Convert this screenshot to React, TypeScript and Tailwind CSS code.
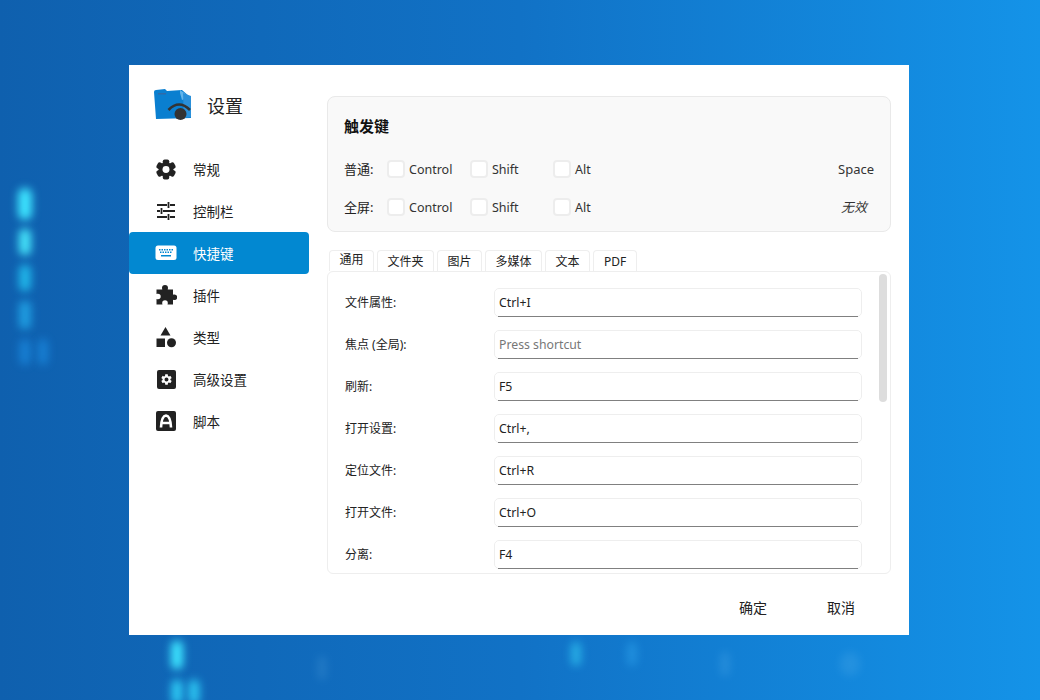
import React from "react";
import { MdSettings } from "react-icons/md";

function Check({ label }: { label: string }) {
  return (
    <div className="flex items-center w-[83px]">
      <span className="w-[18px] h-[18px] rounded-[4px] border-2 border-[#ededed] bg-white mr-[4px] shrink-0" />
      <span className="text-[12.5px] leading-none pt-[2px] text-[#333]">{label}</span>
    </div>
  );
}

function TriggerRow({ title, value, italic }: { title: string; value: string; italic?: boolean }) {
  return (
    <div className="flex items-center h-[38px]">
      <span className="w-[43px] text-[13px] pt-[1px] text-[#222] shrink-0">{title}</span>
      <Check label="Control" />
      <Check label="Shift" />
      <Check label="Alt" />
      <span className={"ml-auto text-[13px] pt-[2px] text-[#333] " + (italic ? "italic mr-[7px]" : "")}>{value}</span>
    </div>
  );
}

function Row({ label, value, placeholder }: { label: string; value: string; placeholder?: boolean }) {
  return (
    <div className="flex items-start h-[42px] shrink-0">
      <span className="w-[149px] h-[28px] pt-[2px] flex items-center text-[12px] text-[#222] shrink-0">{label}</span>
      <div className="relative w-[368px] h-[29px] rounded-[5px] border border-[#eeeeee] bg-white pl-[4px] pt-[2px] flex items-center">
        <span className={"text-[12.25px] " + (placeholder ? "text-[#777]" : "text-[#222]")}>{value}</span>
        <span className="absolute left-[3px] right-[3px] bottom-[-1px] h-[1px] bg-[#808080]" />
      </div>
    </div>
  );
}

function Logo() {
  return (
    <svg width="40" height="34" viewBox="0 0 40 34">
      <path d="M1 4 Q1 2 3 2 L12 1 L14 3 L29 2 L37 9 L38 30 L3 31 Z" fill="#0a7fd0" />
      <path d="M27 2 L37 9 L29 12 L27 5 Z" fill="#62b4ea" />
      <path d="M30 5 L38 8 L38 29 L31 30 Z" fill="#2a90da" />
      <rect x="5" y="5" width="8" height="1.500" fill="#2f6aa8" />
      <path d="M15.500 22 Q26 11 37 22" fill="none" stroke="#333" strokeWidth="2.600" />
      <circle cx="27.500" cy="26" r="6" fill="#333" />
    </svg>
  );
}

function GearIcon() {
  return (
    <svg viewBox="0 0 24 24" className="w-[23px] h-[23px]">
      <g fill="#222">
        <rect x="8.500" y="1" width="7" height="22" rx="2" />
        <rect x="8.500" y="1" width="7" height="22" rx="2" transform="rotate(60 12 12)" />
        <rect x="8.500" y="1" width="7" height="22" rx="2" transform="rotate(120 12 12)" />
        <circle cx="12" cy="12" r="8" />
      </g>
      <circle cx="12" cy="12" r="3.800" fill="#fff" />
    </svg>
  );
}

function PuzzleIcon() {
  return (
    <svg viewBox="0 0 22 22" className="w-[22px] h-[22px] text-[#222]" fill="currentColor">
      <path d="M8 4.500a3 3 0 1 1 6 0c0 .5-.2 1-.3 1.500H19v5.200c.5-.2 1-.3 1.400-.3a2.800 2.800 0 1 1 0 5.600c-.4 0-.9-.1-1.400-.3V21h-5.500c.2-.5.3-1 .3-1.400a2.800 2.800 0 1 0-5.600 0c0 .4.1.9.3 1.400H2.500v-5.500c.5.2 1 .3 1.400.3a2.800 2.800 0 1 0 0-5.600c-.4 0-.9.1-1.400.3V6h5.800C8.200 5.500 8 5 8 4.500z" transform="translate(-1 -0.500)" />
    </svg>
  );
}

function SlidersIcon() {
  return (
    <svg viewBox="0 0 22 22" className="w-[22px] h-[22px] text-[#222]" fill="none" stroke="currentColor" strokeWidth="1.800">
      <path d="M2 5h10M15 5h5M13.500 2v6M2 11h3M8 11h12M6.500 8v6M2 17h10M15 17h5M13.500 14v6" />
    </svg>
  );
}

function KeyboardIcon() {
  return (
    <svg viewBox="0 0 22 16" className="w-[22px] h-[16px]">
      <rect x="0.500" y="0.500" width="21" height="14.500" rx="2.500" fill="#fff" />
      <g fill="#0288d1">
        {[4, 6.500, 9, 11.500, 14, 16.500].map((x) => (
          <rect key={"a" + x} x={x} y="4" width="1.500" height="1.500" />
        ))}
        {[5, 7.500, 10, 12.500, 15].map((x) => (
          <rect key={"b" + x} x={x} y="6.500" width="1.500" height="1.500" />
        ))}
        <rect x="6" y="10" width="10" height="1.500" />
      </g>
    </svg>
  );
}

function ShapesIcon() {
  return (
    <svg viewBox="0 0 22 22" className="w-[22px] h-[22px] text-[#222]" fill="currentColor">
      <path d="M10.500 1l5 8.500H5.500z" />
      <rect x="1.500" y="12.500" width="8.500" height="8.500" />
      <circle cx="16.500" cy="16.800" r="4.500" />
    </svg>
  );
}

function BoxGearIcon() {
  return (
    <span className="w-[19px] h-[19px] rounded-[2px] bg-[#222] flex items-center justify-center">
      <MdSettings size={13} color="#fff" />
    </span>
  );
}

function BoxAIcon() {
  return (
    <svg viewBox="0 0 22 22" className="w-[22px] h-[22px]">
      <rect x="1" y="1" width="20" height="20" rx="2" fill="#222" />
      <path d="M6 17.500 Q6.500 6 11 5.500 Q15.500 6 16 17.500 M7 13 H15" fill="none" stroke="#fff" strokeWidth="2.600" />
    </svg>
  );
}

const items: { label: string; icon: React.ReactNode; active?: boolean }[] = [
  { label: "常规", icon: <GearIcon /> },
  { label: "控制栏", icon: <SlidersIcon /> },
  { label: "快捷键", icon: <KeyboardIcon />, active: true },
  { label: "插件", icon: <PuzzleIcon /> },
  { label: "类型", icon: <ShapesIcon /> },
  { label: "高级设置", icon: <BoxGearIcon /> },
  { label: "脚本", icon: <BoxAIcon /> },
];

const tabs = [
  { t: "通用", w: "w-[45px]" },
  { t: "文件夹", w: "w-[57px]" },
  { t: "图片", w: "w-[45px]" },
  { t: "多媒体", w: "w-[57px]" },
  { t: "文本", w: "w-[45px]" },
  { t: "PDF", w: "w-[44px]" },
];

const rows = [
  { label: "文件属性:", value: "Ctrl+I" },
  { label: "焦点 (全局):", value: "Press shortcut", placeholder: true },
  { label: "刷新:", value: "F5" },
  { label: "打开设置:", value: "Ctrl+," },
  { label: "定位文件:", value: "Ctrl+R" },
  { label: "打开文件:", value: "Ctrl+O" },
  { label: "分离:", value: "F4" },
];

const glows = [
  { x: 25, y: 204, w: 14, h: 32, c: "#3de4ff", o: 1 },
  { x: 25, y: 242, w: 12, h: 27, c: "#48ecff", o: 0.95 },
  { x: 25, y: 278, w: 12, h: 27, c: "#22bff0", o: 0.9 },
  { x: 25, y: 315, w: 12, h: 29, c: "#22a8ea", o: 0.85 },
  { x: 25, y: 352, w: 11, h: 26, c: "#1a8ae0", o: 0.75 },
  { x: 43, y: 352, w: 10, h: 26, c: "#1a8ae0", o: 0.75 },
  { x: 177, y: 655, w: 12, h: 29, c: "#3de4ff", o: 1 },
  { x: 177, y: 692, w: 11, h: 25, c: "#2fd0f8", o: 0.95 },
  { x: 194, y: 692, w: 11, h: 25, c: "#2fd0f8", o: 0.9 },
  { x: 576, y: 654, w: 10, h: 24, c: "#2fc0ee", o: 0.75 },
  { x: 632, y: 654, w: 10, h: 24, c: "#2a9ee8", o: 0.6 },
  { x: 322, y: 668, w: 9, h: 24, c: "#4a9ad8", o: 0.3 },
  { x: 725, y: 664, w: 9, h: 24, c: "#4aa8e8", o: 0.35 },
  { x: 850, y: 664, w: 20, h: 24, c: "#4aa8e8", o: 0.3 },
];

export default function App() {
  return (
    <div className="relative w-[1040px] h-[700px] overflow-hidden flex items-center justify-center pr-[2px] bg-gradient-to-r from-[#0f60ae] via-[#1172c6] to-[#1493e8] [font-family:'Noto_Sans','Noto_Sans_CJK_SC',sans-serif]">
      {glows.map((g, i) => (
        <div
          key={i}
          className="absolute rounded-full blur-[4px]"
          style={{ left: g.x, top: g.y, width: g.w, height: g.h, background: g.c, opacity: g.o, transform: "translate(-50%,-50%)" }}
        />
      ))}
      <div className="relative flex w-[780px] h-[570px] bg-white shrink-0">
        <aside className="w-[180px] shrink-0 flex flex-col">
          <div className="h-[83px] flex items-start pt-[23px] pl-[24px] gap-[14px]">
            <Logo />
            <span className="text-[18px] leading-[36px] text-[#222]">设置</span>
          </div>
          <nav className="flex flex-col">
            {items.map((it) => (
              <div
                key={it.label}
                className={"flex items-center h-[42px] rounded-[4px] " + (it.active ? "bg-[#0288d1] text-white" : "text-[#222]")}
              >
                <span className="w-[64px] flex justify-center pl-[10px] shrink-0">
                  <span className="w-[22px] h-[22px] flex items-center justify-center">{it.icon}</span>
                </span>
                <span className="text-[13.5px] pt-[2px]">{it.label}</span>
              </div>
            ))}
          </nav>
        </aside>
        <main className="flex-1 flex flex-col pt-[31px] pl-[18px] pr-[18px]">
          <section className="h-[136px] rounded-[8px] border border-[#e9e9e9] bg-[#f9f9f9] px-[16px] shrink-0">
            <h2 className="text-[15px] font-bold leading-none text-[#111] mt-[22px] mb-[16px]">触发键</h2>
            <TriggerRow title="普通:" value="Space" />
            <TriggerRow title="全屏:" value="无效" italic />
          </section>
          <div className="flex mt-[18px] gap-[3px] pl-[2px] h-[21px] shrink-0">
            {tabs.map((t, i) => (
              <div
                key={t.t}
                className={
                  "flex items-center justify-center text-[12px] text-[#222] h-[21px] rounded-t-[4px] border border-b-0 border-[#eeeeee] bg-white " +
                  t.w +
                  (i === 0 ? " pb-[2px]" : " pt-[1px]")
                }
              >
                {t.t}
              </div>
            ))}
          </div>
          <section className="relative h-[303px] rounded-[6px] border border-[#eeeeee] bg-white overflow-hidden shrink-0 pl-[17px] pt-[16px] flex flex-col">
            {rows.map((r) => (
              <Row key={r.label} {...r} />
            ))}
            <div className="absolute right-[3px] top-[2px] w-[8px] h-[128px] rounded-full bg-[#dddddd]" />
          </section>
          <div className="flex justify-end items-center flex-1 pr-[36px] pt-[6px] gap-[60px] text-[14px] text-[#222]">
            <span>确定</span>
            <span>取消</span>
          </div>
        </main>
      </div>
    </div>
  );
}
